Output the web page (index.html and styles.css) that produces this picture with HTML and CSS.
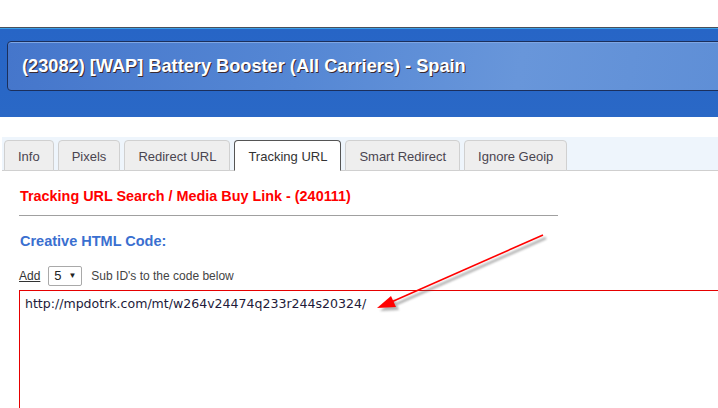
FILE: index.html
```html
<!DOCTYPE html>
<html>
<head>
<meta charset="utf-8">
<link rel="stylesheet" href="styles.css">
</head>
<body>
<div class="page">
  <header class="band">
    <div class="titlebox">
      <h1 class="title">(23082) [WAP] Battery Booster (All Carriers) - Spain</h1>
    </div>
  </header>
  <nav class="tabs">
    <span class="tab">Info</span>
    <span class="tab">Pixels</span>
    <span class="tab">Redirect URL</span>
    <span class="tab active">Tracking URL</span>
    <span class="tab">Smart Redirect</span>
    <span class="tab">Ignore Geoip</span>
  </nav>
  <main class="content">
    <h2 class="heading">Tracking URL Search / Media Buy Link - (240111)</h2>
    <hr class="rule">
    <h3 class="subheading">Creative HTML Code:</h3>
    <div class="subids">
      <a class="add">Add</a>
      <span class="select">5 <span class="caret">▼</span></span>
      <span>Sub ID's to the code below</span>
    </div>
    <div class="code">http://mpdotrk.com/mt/w264v24474q233r244s20324/</div>
  </main>
  <svg class="arrow" width="718" height="408" viewBox="0 0 718 408">
    <defs>
      <filter id="sh" x="-20%" y="-20%" width="140%" height="140%">
        <feGaussianBlur stdDeviation="1.2"/>
      </filter>
    </defs>
    <g opacity="0.45" filter="url(#sh)" transform="translate(3,3)">
      <line x1="543" y1="235" x2="389" y2="303" stroke="#555" stroke-width="2.5"/>
      <polygon points="377,308 391,296 396,307" fill="#555"/>
    </g>
    <line x1="543" y1="235" x2="389" y2="303" stroke="#f00" stroke-width="1.6"/>
    <polygon points="377,308 391,296 396,307" fill="#f00"/>
  </svg>
</div>
</body>
</html>
```
FILE: styles.css
```css
html, body {
  margin: 0;
  padding: 0;
  background: #fff;
  overflow: hidden;
}
.page {
  position: relative;
  width: 718px;
  height: 408px;
  overflow: hidden;
  font-family: "Liberation Sans", Arial, sans-serif;
}
.band {
  margin-top: 27px;
  border-top: 1px solid #4a4f5a;
  box-shadow: inset 0 1px 0 #3aa0e8;
  background: linear-gradient(to bottom, #2765c6, #2a68c6);
  padding-top: 13px;
  box-sizing: border-box;
  height: 90px;
}
.titlebox {
  margin-left: 7px;
  margin-right: -20px;
  height: 50px;
  box-sizing: border-box;
  border: 1px solid #1b2f5c;
  border-radius: 4px;
  background: linear-gradient(100deg, #4576cb 0%, #5587d4 40%, #6896da 70%, #5e8ed6 100%);
  box-shadow: inset 0 1px 0 #7ea6e4;
  display: flex;
  align-items: center;
  padding-left: 14px;
}
.title {
  margin: 0;
  font-size: 18.2px;
  font-weight: bold;
  color: #fff;
  text-shadow: 1px 1px 0 #3a2a30;
}
.tabs {
  margin: 20px 0 0 2px;
  background: #eef5fc;
  border-bottom: 1px solid #cfcfcf;
  padding: 3px 0 0 2px;
  height: 30px;
  display: flex;
  gap: 4px;
  align-items: flex-end;
}
.tab {
  height: 31px;
  box-sizing: border-box;
  margin-bottom: -1px;
  padding: 0 13px;
  border: 1px solid #d0d0d0;
  border-radius: 4px 4px 0 0;
  background: #eeeeee;
  color: #4a4550;
  font-size: 13px;
  padding-top: 2px;
  display: flex;
  align-items: center;
}
.tab.active {
  background: #fff;
  border-color: #555;
  border-bottom-color: #fff;
  color: #333;
}
.content {
  padding-left: 19px;
}
.heading {
  margin: 17px 0 0 1px;
  font-size: 14.4px;
  font-weight: bold;
  color: #f00;
  line-height: 16px;
}
.rule {
  width: 539px;
  margin: 11px 0 0 0;
  border: 0;
  border-top: 1px solid #a0a0a0;
  height: 0;
}
.subheading {
  margin: 16px 0 0 1px;
  font-size: 14.5px;
  font-weight: bold;
  color: #3a6fd0;
  line-height: 18px;
}
.subids {
  margin-top: 15px;
  display: flex;
  align-items: center;
  font-size: 12px;
  color: #444;
  height: 21px;
}
.add {
  color: #333;
  text-decoration: underline;
  margin-right: 8px;
}
.select {
  box-sizing: border-box;
  width: 34px;
  height: 20px;
  border: 1px solid #a9a9a9;
  border-radius: 2px;
  padding-left: 5px;
  margin-right: 9px;
  display: flex;
  align-items: center;
  font-size: 13px;
  color: #222;
  background: #fff;
}
.caret {
  font-size: 8px;
  margin-left: 7px;
}
.code {
  margin-top: 4px;
  margin-right: -20px;
  height: 140px;
  border: 1px solid #e60000;
  padding: 5px 5px;
  font-family: "DejaVu Sans", Verdana, sans-serif;
  font-size: 12.55px;
  color: #221a3a;
}
.arrow {
  position: absolute;
  left: 0;
  top: 0;
  pointer-events: none;
}
```
